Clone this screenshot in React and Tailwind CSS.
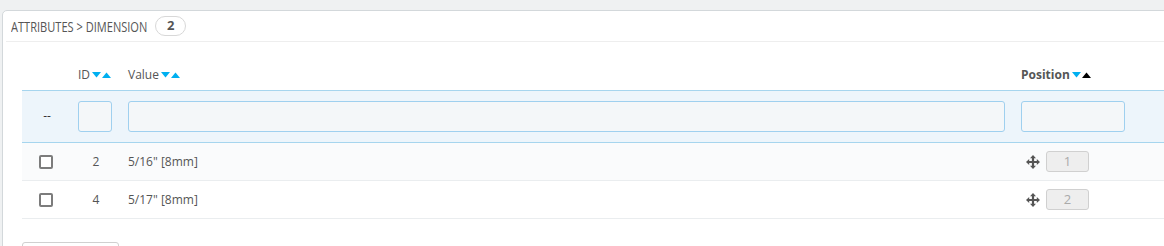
import React from 'react';

function SortArrows({ activeUp }) {
  return (
    <span className="inline-flex items-center gap-[1px] ml-[2px]">
      <svg width="9" height="6" viewBox="0 0 9 6"><path d="M0 0h9L4.5 5.5z" fill="#00aff0" /></svg>
      <svg width="9" height="6" viewBox="0 0 9 6"><path d="M0 6h9L4.5 0.5z" fill={activeUp ? '#000' : '#00aff0'} /></svg>
    </span>
  );
}

function MoveIcon() {
  return (
    <svg width="14" height="14" viewBox="0 0 14 14" className="shrink-0">
      <path d="M7 0L10 3.2H8.1v2.7h2.7V4L14 7l-3.2 3V8.1H8.1v2.7H10L7 14l-3-3.2h1.9V8.1H3.2V10L0 7l3.2-3v1.9h2.7V3.2H4z" fill="#555" />
    </svg>
  );
}

const rows = [
  { id: 2, value: '5/16" [8mm]', pos: 1 },
  { id: 4, value: '5/17" [8mm]', pos: 2 },
];

export default function App() {
  return (
    <div className="w-[1164px] h-[246px] overflow-hidden bg-[#eff1f2] pt-[10px] pl-[2px]" style={{ fontFamily: '"Open Sans", "Liberation Sans", sans-serif' }}>
      <div className="w-[1200px] h-[260px] bg-white border border-[#d3d8db] rounded-tl-[5px] text-[#555]">
        {/* heading */}
        <div className="h-[31px] flex items-center pl-[5px] ml-[3px] border-b border-[#eeeeee]">
          <span className="inline-block w-[136px] whitespace-nowrap overflow-visible">
            <span className="inline-block origin-left scale-x-[0.79] text-[14px] text-[#555]" style={{ fontFamily: '"Liberation Sans Narrow", "Open Sans", sans-serif' }}>
              ATTRIBUTES &gt; DIMENSION
            </span>
          </span>
          <span className="ml-[8px] h-[20px] px-[11px] flex items-center rounded-full border border-[#d8d8d8] text-[13px] font-bold text-[#555]">
            2
          </span>
        </div>

        <div className="ml-[19px] mt-[14px] text-[12px]">
          {/* column header */}
          <div className="h-[34px] flex items-center pt-[3px]">
            <div className="w-[48px]" />
            <div className="w-[50px] pl-[8px] flex items-center text-[#555]">ID<SortArrows /></div>
            <div className="w-[893px] pl-[8px] flex items-center text-[#555]">Value<SortArrows /></div>
            <div className="w-[120px] pl-[8px] flex items-center font-bold text-[#555]">Position<SortArrows activeUp /></div>
          </div>

          {/* filter row */}
          <div className="h-[53px] flex items-center bg-[#edf5fb] border-y border-[#a6d5ee]">
            <div className="w-[48px] text-center pl-[2px] -mt-[2px] text-[#333]">--</div>
            <div className="w-[50px] px-[8px]"><div className="h-[31px] w-[34px] bg-[#f4f7f9] border border-[#9fd0ef] rounded-[3px]" /></div>
            <div className="w-[893px] px-[8px]"><div className="h-[31px] bg-[#f4f7f9] border border-[#9fd0ef] rounded-[3px]" /></div>
            <div className="w-[120px] px-[8px]"><div className="h-[31px] w-[104px] bg-[#f4f7f9] border border-[#9fd0ef] rounded-[3px]" /></div>
          </div>

          {rows.map((r, i) => (
            <div key={r.id} className={`h-[38px] flex items-center border-b border-[#eaedef] ${i === 0 ? 'bg-[#fafbfc]' : 'bg-white'}`}>
              <div className="w-[48px] flex justify-center">
                <div className="w-[14px] h-[14px] border-[2px] border-[#7c7c7c] rounded-[2px] bg-white" />
              </div>
              <div className="w-[50px] px-[8px] text-center pl-[10px]">{r.id}</div>
              <div className="w-[893px] px-[8px]">{r.value}</div>
              <div className="w-[120px] pl-[13px] flex items-center gap-[6px]">
                <MoveIcon />
                <div className="w-[43px] h-[21px] bg-[#eeeeee] border border-[#d0d0d0] rounded-[3px] flex items-center justify-center text-[13px] text-[#aaa]">{r.pos}</div>
              </div>
            </div>
          ))}

          <div className="mt-[23px] w-[97px] h-[30px] border border-[#d0d0d0] rounded-[3px] bg-white" />
        </div>
      </div>
    </div>
  );
}
